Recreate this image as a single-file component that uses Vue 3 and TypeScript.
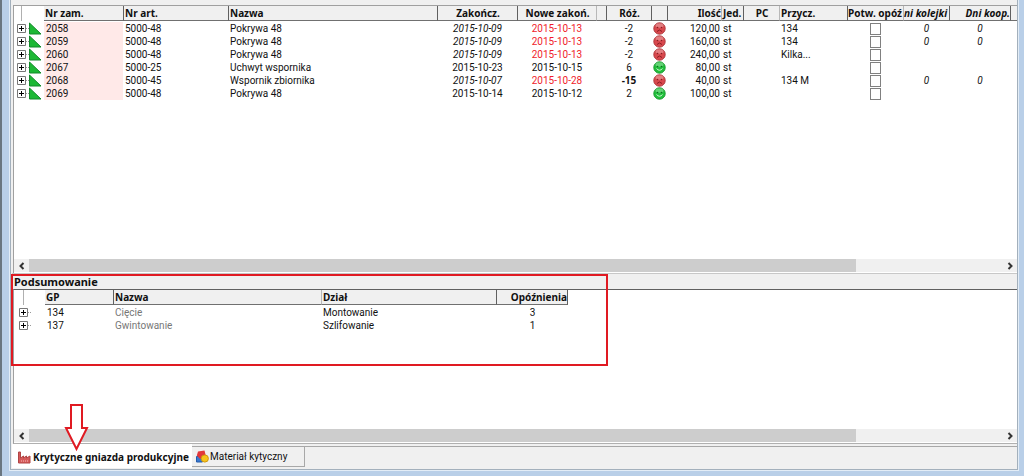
<script setup lang="ts">
interface Order {
  nr: string
  art: string
  name: string
  end: string
  next: string
  late: boolean
  diff: string
  strong?: boolean
  qty: string
  cause: string
  days: string
}

const orders: Order[] = [
  { nr: '2058', art: '5000-48', name: 'Pokrywa 48', end: '2015-10-09', next: '2015-10-13', late: true, diff: '-2', qty: '120,00', cause: '134', days: '0' },
  { nr: '2059', art: '5000-48', name: 'Pokrywa 48', end: '2015-10-09', next: '2015-10-13', late: true, diff: '-2', qty: '160,00', cause: '134', days: '0' },
  { nr: '2060', art: '5000-48', name: 'Pokrywa 48', end: '2015-10-09', next: '2015-10-13', late: true, diff: '-2', qty: '240,00', cause: 'Kilka...', days: '' },
  { nr: '2067', art: '5000-25', name: 'Uchwyt wspornika', end: '2015-10-23', next: '2015-10-15', late: false, diff: '6', qty: '80,00', cause: '', days: '' },
  { nr: '2068', art: '5000-45', name: 'Wspornik zbiornika', end: '2015-10-07', next: '2015-10-28', late: true, diff: '-15', strong: true, qty: '40,00', cause: '134 M', days: '0' },
  { nr: '2069', art: '5000-48', name: 'Pokrywa 48', end: '2015-10-14', next: '2015-10-12', late: false, diff: '2', qty: '100,00', cause: '', days: '' },
]

const summary = [
  { gp: '134', name: 'Cięcie', dept: 'Montowanie', count: '3' },
  { gp: '137', name: 'Gwintowanie', dept: 'Szlifowanie', count: '1' },
]
</script>

<template>
  <main class="window">
    <div class="panel">
      <section class="orders">
        <table class="grid">
          <colgroup>
            <col class="w-tree" /><col class="w-nr" /><col class="w-art" /><col class="w-name" />
            <col class="w-end" /><col class="w-next" /><col class="w-gap" /><col class="w-diff" />
            <col class="w-face" /><col class="w-qty" /><col class="w-unit" /><col class="w-pc" />
            <col class="w-cause" /><col class="w-conf" /><col class="w-queue" /><col class="w-coop" /><col />
          </colgroup>
          <thead>
            <tr>
              <td class="stem"></td>
              <th class="first">Nr zam.</th>
              <th>Nr art.</th>
              <th>Nazwa</th>
              <th class="mid">Zakończ.</th>
              <th class="mid">Nowe zakoń.</th>
              <th class="pale"></th>
              <th class="mid">Róż.</th>
              <th></th>
              <th class="end">Ilość</th>
              <th class="pale">Jed.</th>
              <th class="mid">PC</th>
              <th class="pale">Przycz.</th>
              <th class="tight">Potw. opóź</th>
              <th class="pale tight it">ni kolejki</th>
              <th class="end it">Dni koop.</th>
              <th></th>
            </tr>
          </thead>
          <tbody>
            <tr v-for="o in orders" :key="o.nr">
              <td class="tree">
                <div class="node">
                  <button class="plus" type="button" :aria-label="'Rozwiń ' + o.nr">
                    <svg viewBox="0 0 9 9"><path d="M.5.5h8v8h-8z" fill="#fff" stroke="#777" /><path d="M2 4.5h5M4.5 2v5" stroke="#000" /></svg>
                  </button>
                  <span class="dash"></span>
                  <svg class="flag" viewBox="0 0 13 13"><path d="M.5 1v11h11.5z" fill="#1db835" stroke="#128a2a" /></svg>
                </div>
              </td>
              <td class="pink">{{ o.nr }}</td>
              <td>{{ o.art }}</td>
              <td>{{ o.name }}</td>
              <td class="mid" :class="{ it: o.late }">{{ o.end }}</td>
              <td class="mid" :class="{ red: o.late }">{{ o.next }}</td>
              <td></td>
              <td class="mid" :class="{ strong: o.strong }">{{ o.diff }}</td>
              <td class="face-cell">
                <svg class="face" viewBox="0 0 13 13">
                  <circle cx="6.5" cy="6.5" r="5.7" :fill="o.late ? '#d8484d' : '#22c03c'" :stroke="o.late ? '#b0383c' : '#1a9a30'" />
                  <ellipse cx="6.5" cy="3.5" rx="4" ry="2.2" fill="#fff" opacity=".3" />
                  <circle cx="4.5" cy="5.5" r=".8" :fill="o.late ? '#8a1d22' : '#0b6e1e'" />
                  <circle cx="8.5" cy="5.5" r=".8" :fill="o.late ? '#8a1d22' : '#0b6e1e'" />
                  <path :d="o.late ? 'M4 9.500q2.500-3 5 0' : 'M3.500 7.500q3 3.500 6 0'" fill="none" :stroke="o.late ? '#8a1d22' : '#c8f5ce'" />
                </svg>
              </td>
              <td class="end">{{ o.qty }}</td>
              <td>st</td>
              <td></td>
              <td>{{ o.cause }}</td>
              <td class="mid"><input class="tick" type="checkbox" :aria-label="'Potw. opóź ' + o.nr" /></td>
              <td class="mid it">{{ o.days }}</td>
              <td class="mid it">{{ o.days }}</td>
              <td></td>
            </tr>
          </tbody>
        </table>
        <div class="scrollbar">
          <button type="button" aria-label="W lewo"><svg viewBox="0 0 6 8"><path d="M4.500 1 1.500 4l3 3" /></svg></button>
          <span class="track"><span class="thumb"></span></span>
          <button type="button" aria-label="W prawo"><svg viewBox="0 0 6 8"><path d="m1.500 1 3 3-3 3" /></svg></button>
        </div>
      </section>

      <h2 class="caption">Podsumowanie</h2>

      <section class="summary">
        <table class="grid short">
          <colgroup>
            <col class="s-tree" /><col class="s-gp" /><col class="s-name" /><col class="s-dept" /><col class="s-count" />
          </colgroup>
          <thead>
            <tr>
              <td class="stem"></td>
              <th class="first">GP</th>
              <th>Nazwa</th>
              <th class="pale">Dział</th>
              <th class="end last">Opóźnienia</th>
            </tr>
          </thead>
          <tbody>
            <tr v-for="s in summary" :key="s.gp">
              <td class="tree">
                <div class="node">
                  <button class="plus" type="button" :aria-label="'Rozwiń ' + s.gp">
                    <svg viewBox="0 0 9 9"><path d="M.5.5h8v8h-8z" fill="#fff" stroke="#777" /><path d="M2 4.5h5M4.5 2v5" stroke="#000" /></svg>
                  </button>
                  <span class="dash"></span>
                </div>
              </td>
              <td>{{ s.gp }}</td>
              <td class="grey">{{ s.name }}</td>
              <td>{{ s.dept }}</td>
              <td class="mid">{{ s.count }}</td>
            </tr>
          </tbody>
        </table>
        <div class="scrollbar">
          <button type="button" aria-label="W lewo"><svg viewBox="0 0 6 8"><path d="M4.500 1 1.500 4l3 3" /></svg></button>
          <span class="track"><span class="thumb"></span></span>
          <button type="button" aria-label="W prawo"><svg viewBox="0 0 6 8"><path d="m1.500 1 3 3-3 3" /></svg></button>
        </div>
      </section>

      <nav class="tabs">
        <button class="tab active" type="button">
          <svg class="factory" viewBox="0 0 13 12"><path d="M.5 11.500V.5h2v6l3-2v2l3-2v2l3.500-2v7z" fill="#d65a5a" stroke="#b04444" /><path d="M3 9.500h8" stroke="#f4bcbc" stroke-dasharray="1 1" /></svg>
          <span>Krytyczne gniazda produkcyjne</span>
        </button>
        <button class="tab" type="button">
          <svg class="shapes" viewBox="0 0 13 13"><path d="M.5 6.500h6v5.500h-6z" fill="#3879d0" stroke="#245baa" /><path d="M2 1.500 8.500.500 10 6.500 4 9 .800 5.500z" fill="#e2383b" /><circle cx="8.800" cy="8.500" r="3.600" fill="#f6c51c" stroke="#cf9610" /></svg>
          <span>Materiał kytyczny</span>
        </button>
        <span class="rest"></span>
      </nav>
    </div>

    <div class="mark"></div>
    <svg class="arrow" viewBox="0 0 26 50"><path d="M8 2h11v23h5L13.500 46 3 25h5z" /></svg>
  </main>
</template>

<style>
body {
  background: #b9cfe8;
}
</style>

<style scoped>
.window {
  position: relative;
  box-sizing: border-box;
  height: 100vh;
  padding: 0 6px 6px 8px;
  border-left: 2px solid #6a7680;
  background: #b9cfe8;
  font: 10px/13px Roboto, "Noto Sans", sans-serif;
  color: #111;
}
.panel {
  display: flex;
  flex-direction: column;
  box-sizing: border-box;
  height: 100%;
  padding: 5px 0 1px 1px;
  border: solid #a3b0bc;
  border-width: 0 1px 1px;
  background: #f0f0f0;
  outline: 1px solid #e3edf7;
}
.orders,
.summary {
  display: flex;
  flex-direction: column;
  min-height: 0;
  overflow: hidden;
  margin-left: 1px;
  border-top: 1px solid #a0a0a0;
  border-left: 1px solid #a0a0a0;
  background: #fff;
}
.orders {
  flex: 267 1 0;
}
.summary {
  flex: 153 1 0;
  border-top-color: #606060;
  border-bottom: 1px solid #b0b0b0;
}
.grid {
  width: 100%;
  table-layout: fixed;
  border-collapse: separate;
  border-spacing: 0;
}
.short {
  width: 554px;
}
.w-tree { width: 30px; }
.w-nr { width: 79px; }
.w-art { width: 105px; }
.w-name { width: 209px; }
.w-end { width: 80px; }
.w-next { width: 79px; }
.w-gap { width: 10px; }
.w-diff { width: 45px; }
.w-face { width: 16px; }
.w-qty { width: 54px; }
.w-unit { width: 22px; }
.w-pc { width: 36px; }
.w-cause { width: 68px; }
.w-conf { width: 56px; }
.w-queue { width: 46px; }
.w-coop { width: 61px; }
.s-tree { width: 31px; }
.s-gp { width: 68px; }
.s-name { width: 208px; }
.s-dept { width: 175px; }
.s-count { width: 72px; }
th,
td {
  height: 13px;
  padding: 0 1px 0 2px;
  text-align: left;
  white-space: nowrap;
}
th,
.strong,
.caption,
.tab.active {
  font-family: "Noto Sans", sans-serif;
  font-weight: bold;
}
thead th {
  height: 14px;
  padding: 0 0 0 1px;
  border-bottom: 1px solid #707070;
  border-left: 1px solid #606060;
  background: #f0f0f0;
}
thead th.tight {
  padding: 0;
}
thead th.first {
  border-left: 0;
}
thead th.pale {
  border-left-color: #b8b8b8;
}
thead th.last {
  border-right: 1px solid #606060;
}
th.mid,
td.mid {
  text-align: center;
}
th.end,
td.end {
  text-align: right;
}
tbody::before {
  display: table-row;
  height: 1px;
  content: "";
}
.it {
  font-style: italic;
}
.red {
  color: #f01c2a;
}
.grey {
  color: #777;
}
.pink {
  background: #ffe9e8;
}
.stem {
  background: linear-gradient(#b0b0b0, #b0b0b0) 7px 0 / 1px 100% no-repeat;
}
.tree {
  padding: 0;
}
.node {
  display: flex;
  align-items: center;
  height: 13px;
  padding-left: 3px;
}
.summary .node {
  padding-left: 5px;
}
.summary .stem {
  background-position: 9px 0;
}
.plus {
  display: block;
  width: 9px;
  height: 9px;
  padding: 0;
  border: 0;
  background: none;
}
.plus svg,
.face,
.flag {
  display: block;
}
.dash {
  width: 3px;
  border-top: 1px dotted #999;
}
.flag {
  width: 13px;
  height: 13px;
}
.face {
  width: 13px;
  height: 13px;
}
.tick {
  display: block;
  appearance: none;
  box-sizing: border-box;
  width: 11px;
  height: 12px;
  margin: 0 auto;
  border: 1px solid #808080;
  background: #fff;
}
.scrollbar {
  display: flex;
  height: 13px;
  margin-top: auto;
  margin-bottom: 1px;
  background: #f0f0f0;
}
.scrollbar button {
  display: flex;
  align-items: center;
  justify-content: center;
  width: 15px;
  padding: 0;
  border: 0;
  background: none;
}
.scrollbar svg {
  width: 6px;
  height: 8px;
  fill: none;
  stroke: #333;
  stroke-width: 2;
}
.track {
  flex: 1;
}
.thumb {
  display: block;
  width: 85%;
  height: 100%;
  background: #cdcdcd;
}
.caption {
  margin: 0;
  height: 15px;
  padding-left: 2px;
  border-top: 1px solid #c8c8c8;
  font-size: 11px;
  line-height: 15px;
}
.tabs {
  display: flex;
  height: 24px;
}
.tab {
  display: flex;
  align-items: center;
  gap: 1px;
  box-sizing: border-box;
  width: 113px;
  height: 21px;
  margin-top: 2px;
  padding: 0 4px;
  border: solid #a8a8a8;
  border-width: 1px 1px 1px 0;
  background: #f0f0f0;
  font: inherit;
  color: inherit;
  white-space: nowrap;
}
.tab.active {
  width: 180px;
  height: 24px;
  margin-top: 0;
  padding: 2px 6px 0;
  gap: 2px;
  border: 0;
  background: #fff;
  font-family: "Noto Sans", sans-serif;
  font-weight: bold;
}
.factory,
.shapes {
  flex: none;
  width: 13px;
  height: 13px;
}
.rest {
  flex: 1;
  margin-top: 2px;
  border-top: 1px solid #a8a8a8;
}
.mark {
  position: absolute;
  left: 9px;
  top: 274px;
  box-sizing: border-box;
  width: 597px;
  height: 92px;
  border: 2px solid #e01a22;
}
.arrow {
  position: absolute;
  left: 61px;
  top: 403px;
  width: 26px;
  height: 50px;
  fill: #fff;
  stroke: #e01a22;
  stroke-width: 2;
}
</style>
